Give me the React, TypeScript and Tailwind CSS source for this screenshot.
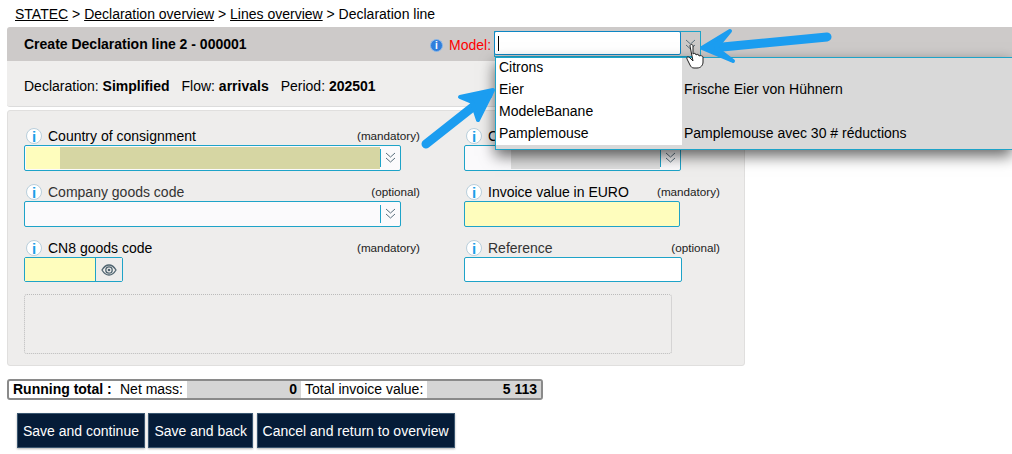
import React from 'react';

function InfoIcon() {
  return (
    <span className="w-[16px] h-[16px] mr-[6px] ml-[2px] rounded-full border border-[#b9cfdc] bg-white flex items-center justify-center text-[#1ba1e8] text-[15px] font-bold leading-none shrink-0">
      i
    </span>
  );
}

function DoubleChevron() {
  return (
    <svg width="11" height="14" viewBox="0 0 11 14" fill="none" stroke="#5a6f7c" strokeWidth="1">
      <path d="M1 2l4.500 4 4.500-4" />
      <path d="M1 7l4.500 4 4.500-4" />
    </svg>
  );
}

function EyeIcon() {
  return (
    <svg width="16" height="12" viewBox="0 0 16 12" fill="none" stroke="#4f6470">
      <path d="M1 6c2-3.400 4.400-5 7-5s5 1.600 7 5c-2 3.400-4.400 5-7 5s-5-1.600-7-5z" strokeWidth="1.300" />
      <circle cx="8" cy="6" r="3.200" strokeWidth="1.300" />
      <circle cx="8" cy="6" r="1.300" fill="#4f6470" stroke="none" />
    </svg>
  );
}

function Label({ text, hint, dim, right }: { text: string; hint: string; dim?: boolean; right?: boolean }) {
  return (
    <div className={`flex items-center h-[18px] ${right ? '-mr-[39px]' : '-mr-[19px]'}`}>
      <InfoIcon />
      <span className={`whitespace-nowrap ${dim ? 'text-[#333]' : 'text-black'}`}>{text}</span>
      <span className="ml-auto text-[11.7px] text-[#222]">{hint}</span>
    </div>
  );
}

function Select({ children }: { children: React.ReactNode }) {
  return (
    <div className="h-[26px] flex border border-[#1ea3c8] rounded-[2px] bg-[#fbfafc] overflow-hidden">
      <div className="flex-1 flex m-[1px] mr-0">{children}</div>
      <div className="w-[20px] my-[3px] border-l border-[#1ea3c8] flex items-center justify-center">
        <DoubleChevron />
      </div>
    </div>
  );
}

export default function App() {
  return (
    <div className="relative w-[1012px] h-[454px] overflow-hidden bg-white text-black text-[14px] font-['Liberation_Sans',Arial,sans-serif]">
      <div className="h-[27px] pl-[15px] pt-[6px] leading-[16px]">
        <span className="underline">STATEC</span> &gt; <span className="underline">Declaration overview</span> &gt;{' '}
        <span className="underline">Lines overview</span> &gt; Declaration line
      </div>

      <div className="ml-[7px] h-[34px] bg-[#cdcac9] rounded-tl-[3px] pl-[17px] flex items-center font-bold">
        Create Declaration line 2 - 000001
      </div>
      <div className="ml-[7px] w-[738px] h-[46px] bg-[#efeeed] border-b border-[#dcdcdc] rounded-b-[3px] pl-[17px] pt-[17px] leading-[16px] whitespace-nowrap">
        Declaration: <b>Simplified</b>
        <span className="ml-[12px]">Flow:</span> <b>arrivals</b>
        <span className="ml-[12px]">Period:</span> <b>202501</b>
      </div>

      <div className="ml-[7px] mt-[3px] w-[738px] h-[256px] bg-[#eeedec] border border-[#e0dfde] rounded-[3px] pl-[16px] pt-[16px]">
        <div className="grid grid-cols-[377px_217px] gap-x-[63px] gap-y-[12px]">
          <div>
            <Label text="Country of consignment" hint="(mandatory)" />
            <Select>
              <div className="w-[34px] bg-[#fefdbd]" />
              <div className="flex-1 bg-[#d6d6a3]" />
            </Select>
          </div>
          <div>
            <Label text="C" hint="" right />
            <Select>
              <div className="w-[45px]" />
              <div className="flex-1 bg-[#dedede]" />
            </Select>
          </div>
          <div>
            <Label text="Company goods code" hint="(optional)" dim />
            <Select>
              <div className="flex-1" />
            </Select>
          </div>
          <div>
            <Label text="Invoice value in EURO" hint="(mandatory)" right />
            <div className="h-[26px] w-[216px] bg-[#fefdbd] border border-[#1ea3c8] rounded-[2px]" />
          </div>
          <div>
            <Label text="CN8 goods code" hint="(mandatory)" />
            <div className="h-[25px] w-[99px] flex border border-[#1ea3c8] rounded-[2px]">
              <div className="w-[71px] bg-[#fefdbd] border-r border-[#1ea3c8]" />
              <div className="flex-1 flex items-center justify-center bg-[#eeedec]">
                <EyeIcon />
              </div>
            </div>
          </div>
          <div>
            <Label text="Reference" hint="(optional)" dim right />
            <div className="h-[25px] w-[218px] bg-white border border-[#1ea3c8] rounded-[2px]" />
          </div>
        </div>
        <div className="mt-[12px] w-[648px] h-[60px] border border-dotted border-[#bbb] rounded-[3px]" />
      </div>

      <div className="ml-[7px] mt-[13px] w-[536px] h-[21px] flex items-stretch border-2 border-[#8a8a8a] rounded-[3px] bg-white leading-[17px]">
        <b className="ml-[4px] w-[107px]">Running total :</b>
        <span className="w-[67px]">Net mass:</span>
        <b className="w-[114px] bg-[#d5d5d5] text-right pr-[4px]">0</b>
        <span className="w-[126px] pl-[4px]">Total invoice value:</span>
        <b className="flex-1 bg-[#d5d5d5] text-right pr-[4px]">5 113</b>
      </div>

      <div className="ml-[17px] mt-[13px] flex gap-[3.5px]">
        {['Save and continue', 'Save and back', 'Cancel and return to overview'].map((b) => (
          <div
            key={b}
            className="h-[35px] px-[5px] pt-[1px] flex items-center bg-[#051c38] border border-[#3a5670] text-white shadow-[0_1px_2px_rgba(0,0,0,0.3)]"
          >
            {b}
          </div>
        ))}
      </div>

      {/* model picker over the header */}
      <div className="absolute left-[430px] top-[35px] flex items-center">
        <span className="w-[13px] h-[13px] rounded-full bg-[#2f7fdc] border border-[#8db8e8] text-white text-[10px] font-bold leading-none flex items-center justify-center">
          i
        </span>
        <span className="ml-[6px] text-[#f00]">Model:</span>
      </div>
      <div className="absolute left-[494px] top-[31px] w-[207px] h-[26px] flex border border-[#1ea3c8]">
        <div className="w-[187px] h-full bg-white border border-[#0d86c4] rounded-[2px] -m-px pl-[3px] pt-[4px]">
          <div className="w-px h-[15px] bg-black" />
        </div>
        <div className="flex-1 flex items-center justify-center pt-[2px]">
          <DoubleChevron />
        </div>
      </div>

      <div className="absolute left-[495px] top-[57px] right-0 h-[93px] flex bg-[#d9d9d9] border-y border-l border-[#1ea3c8] shadow-[0_6px_14px_rgba(0,0,0,0.6)]">
        <div className="w-[186px] bg-white pl-[3px] h-[87px]">
          {['Citrons', 'Eier', 'ModeleBanane', 'Pamplemouse'].map((m) => (
            <div key={m} className="h-[22px] leading-[18px]">
              {m}
            </div>
          ))}
        </div>
        <div className="pl-[2px]">
          {['', 'Frische Eier von Hühnern', '', 'Pamplemouse avec 30 # réductions'].map((d, i) => (
            <div key={i} className="h-[22px] leading-[18px]">
              {d}
            </div>
          ))}
        </div>
      </div>

      {/* annotation arrows and pointer */}
      <svg className="absolute left-0 top-0 pointer-events-none" width="1012" height="454" fill="none">
        <g stroke="#1b9df0" strokeLinecap="round" strokeLinejoin="round">
          <path d="M426 144L488 95" strokeWidth="9" />
          <path d="M460 97L493 90L478 120L472 102Z" strokeWidth="4" fill="#1b9df0" />
          <path d="M827 37L712 48" strokeWidth="9" />
          <path d="M730 31L702 48L733 61L716 48Z" strokeWidth="4" fill="#1b9df0" />
        </g>
        <path
          d="M690 46c0-2 3-2 3 0v8c1-1 3-1 3 1 1-1 3-1 3 1 1-1 4 0 4 1v5c0 3-2 6-6 6h-3c-2 0-3-1-4-3l-3-6c-1-2 1-3 3-1l3 3z"
          fill="#fff"
          stroke="#222"
          strokeWidth="1"
        />
      </svg>
    </div>
  );
}
